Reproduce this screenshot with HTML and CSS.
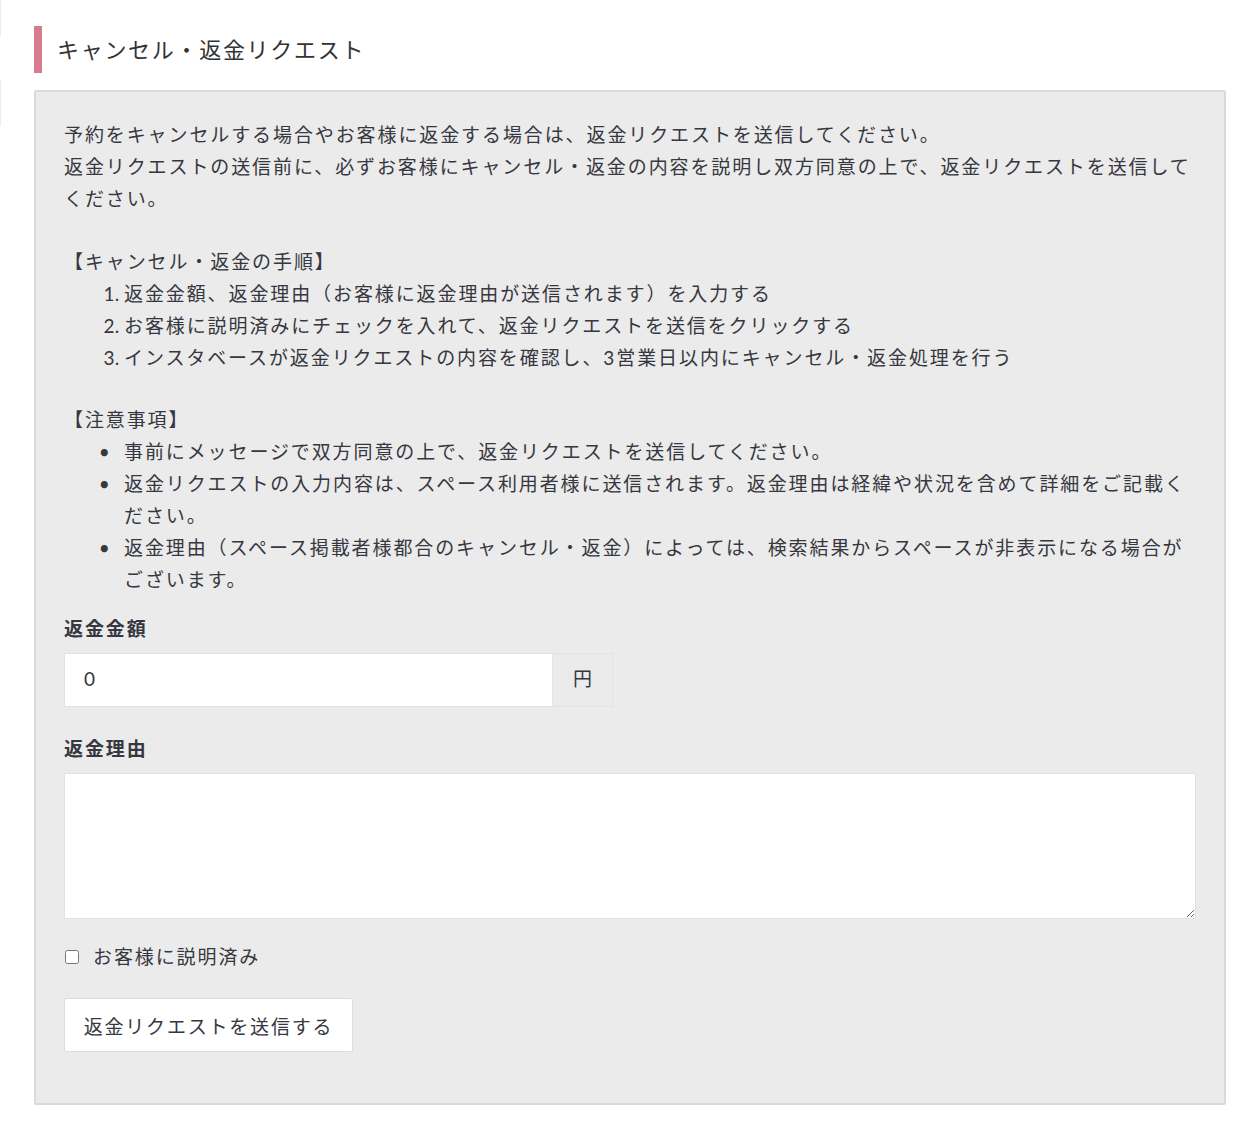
FILE: index.html
```html
<!DOCTYPE html>
<html lang="ja">
<head>
    <meta charset="UTF-8">
    <meta name="viewport" content="width=device-width, initial-scale=1.0">
    <title>キャンセル・返金リクエスト</title>
    <link rel="stylesheet" href="styles.css">
</head>
<body>
    <div class="page">
        <!-- 左側の区切り線 -->
        <div class="side">
            <span class="side-line top"></span>
            <span class="side-line mid"></span>
        </div>
        <div class="main">
            <h2 class="title">キャンセル・返金リクエスト</h2>
            <div class="panel">
                <p class="lead">予約をキャンセルする場合やお客様に返金する場合は、返金リクエストを送信してください。<br>返金リクエストの送信前に、必ずお客様にキャンセル・返金の内容を説明し双方同意の上で、返金リクエストを送信してください。</p>
                <p class="sub">【キャンセル・返金の手順】</p>
                <ol class="steps">
                    <li>返金金額、返金理由（お客様に返金理由が送信されます）を入力する</li>
                    <li>お客様に説明済みにチェックを入れて、返金リクエストを送信をクリックする</li>
                    <li>インスタベースが返金リクエストの内容を確認し、3営業日以内にキャンセル・返金処理を行う</li>
                </ol>
                <p class="sub">【注意事項】</p>
                <ul class="notes">
                    <li>事前にメッセージで双方同意の上で、返金リクエストを送信してください。</li>
                    <li>返金リクエストの入力内容は、スペース利用者様に送信されます。返金理由は経緯や状況を含めて詳細をご記載ください。</li>
                    <li>返金理由（スペース掲載者様都合のキャンセル・返金）によっては、検索結果からスペースが非表示になる場合がございます。</li>
                </ul>
                <!-- 入力フォーム -->
                <div class="field first">
                    <label class="label" for="amount">返金金額</label>
                    <div class="input-group">
                        <input class="input" id="amount" type="text" value="0">
                        <span class="addon">円</span>
                    </div>
                </div>
                <div class="field">
                    <label class="label" for="reason">返金理由</label>
                    <textarea class="textarea" id="reason"></textarea>
                </div>
                <label class="check">
                    <input type="checkbox">
                    <span>お客様に説明済み</span>
                </label>
                <button class="btn" type="button">返金リクエストを送信する</button>
            </div>
        </div>
    </div>
</body>
</html>
```

FILE: styles.css
```css
*{
    margin: 0;
    padding: 0;
    box-sizing: border-box;
}
body{
    font-family: "Lato", "Noto Sans CJK JP", sans-serif;
    color: #363740;
    background-color: #fff;
}
.page{
    display: flex;
    flex-direction: row;
}
.side{
    width: 2px;
    display: flex;
    flex-direction: column;
}
.side-line{
    display: block;
    border-left: 1px solid #ececec;
}
.side-line.top{
    height: 36px;
}
.side-line.mid{
    height: 46px;
    margin-top: 44px;
}
.main{
    width: 1192px;
    margin-left: 32px;
    padding-top: 26px;
}
.title{
    height: 47px;
    line-height: 47px;
    border-left: 8px solid #d97b8f;
    padding-left: 15px;
    font-size: 22px;
    font-weight: normal;
    letter-spacing: 1.7px;
    color: #333;
    margin-bottom: 17px;
}
.panel{
    background-color: #ebebeb;
    border: 2px solid #dadada;
    border-radius: 2px;
    padding: 27px 28px 51px 28px;
    font-size: 19px;
    line-height: 32px;
    letter-spacing: 1.9px;
}
.lead{
    margin-bottom: 31px;
}
.steps{
    padding-left: 60px;
    margin-bottom: 30px;
}
.steps li::marker{
    letter-spacing: 0;
    content: counter(list-item) ".\00a0";
}
.notes{
    padding-left: 60px;
}
.notes li::marker{
    letter-spacing: 0;
    content: "•\2003";
}
.field.first{
    margin-top: 20px;
}
.field{
    margin-top: 29px;
}
.label{
    display: block;
    font-weight: bold;
    line-height: 26px;
    margin-bottom: 11px;
}
.input-group{
    display: flex;
    flex-direction: row;
    width: 549px;
    height: 54px;
}
.input{
    width: 489px;
    height: 54px;
    border: 1px solid #e2e2e2;
    background-color: #fff;
    padding: 0 19px 3px 19px;
    font-family: inherit;
    font-size: 19px;
    color: #363740;
    outline: none;
}
.addon{
    width: 60px;
    height: 54px;
    line-height: 50px;
    text-align: center;
    border: 1px solid #e2e2e2;
    border-left: none;
    background-color: #ebebeb;
    letter-spacing: 0;
}
.textarea{
    display: block;
    width: 100%;
    height: 146px;
    border: 1px solid #e2e2e2;
    background-color: #fff;
    font-family: inherit;
    font-size: 18px;
    padding: 10px 19px;
    outline: none;
}
.check{
    display: flex;
    flex-direction: row;
    align-items: center;
    margin-top: 25px;
    line-height: 26px;
}
.check input{
    width: 14px;
    height: 14px;
    margin: 0 14px 0 1px;
}
.btn{
    display: block;
    margin-top: 28px;
    width: 289px;
    height: 54px;
    background-color: #fff;
    border: 1px solid #dcdcdc;
    border-radius: 2px;
    font-family: inherit;
    font-size: 19px;
    letter-spacing: 1.8px;
    color: #363740;
    cursor: pointer;
}
.btn:hover{
    background-color: #f6f6f6;
}
```
